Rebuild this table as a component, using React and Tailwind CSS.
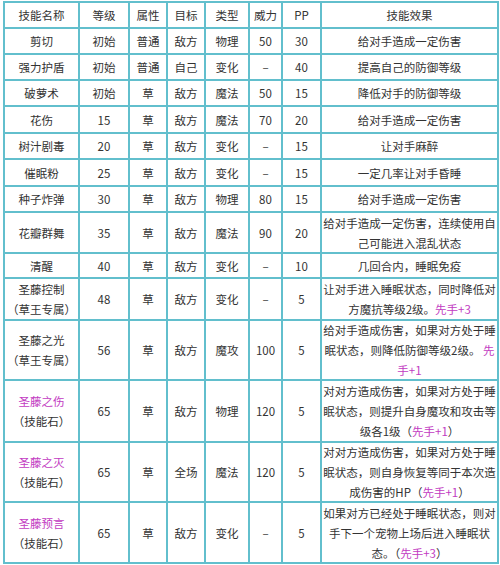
import React from "react";

const P = ({ children }) => <span className="text-[#c23bc2]">{children}</span>;

const rows = [
  { name: ["剪切"], lv: "初始", attr: "普通", tgt: "敌方", type: "物理", pow: "50", pp: "30", eff: ["给对手造成一定伤害"] },
  { name: ["强力护盾"], lv: "初始", attr: "普通", tgt: "自己", type: "变化", pow: "–", pp: "40", eff: ["提高自己的防御等级"] },
  { name: ["破萝术"], lv: "初始", attr: "草", tgt: "敌方", type: "魔法", pow: "50", pp: "15", eff: ["降低对手的防御等级"] },
  { name: ["花伤"], lv: "15", attr: "草", tgt: "敌方", type: "魔法", pow: "70", pp: "20", eff: ["给对手造成一定伤害"] },
  { name: ["树汁剧毒"], lv: "20", attr: "草", tgt: "敌方", type: "变化", pow: "–", pp: "15", eff: ["让对手麻醉"] },
  { name: ["催眠粉"], lv: "25", attr: "草", tgt: "敌方", type: "变化", pow: "–", pp: "15", eff: ["一定几率让对手昏睡"] },
  { name: ["种子炸弹"], lv: "30", attr: "草", tgt: "敌方", type: "物理", pow: "80", pp: "15", eff: ["给对手造成一定伤害"] },
  { name: ["花瓣群舞"], lv: "35", attr: "草", tgt: "敌方", type: "魔法", pow: "90", pp: "20", eff: ["给对手造成一定伤害，连续使用自", "己可能进入混乱状态"] },
  { name: ["清醒"], lv: "40", attr: "草", tgt: "敌方", type: "变化", pow: "–", pp: "10", eff: ["几回合内，睡眠免疫"] },
  { name: ["圣藤控制", "（草王专属）"], lv: "48", attr: "草", tgt: "敌方", type: "变化", pow: "–", pp: "5", eff: ["让对手进入睡眠状态，同时降低对", <>方魔抗等级2级。<P>先手+3</P></>] },
  { name: ["圣藤之光", "（草王专属）"], lv: "56", attr: "草", tgt: "敌方", type: "魔攻", pow: "100", pp: "5", eff: ["给对手造成伤害，如果对方处于睡", <>眠状态，则降低防御等级2级。 <P>先</P></>, <P>手+1</P>] },
  { name: [<P>圣藤之伤</P>, "（技能石）"], lv: "65", attr: "草", tgt: "敌方", type: "物理", pow: "120", pp: "5", eff: ["对对方造成伤害，如果对方处于睡", "眠状态，则提升自身魔攻和攻击等", <>级各1级（<P>先手+1</P>）</>] },
  { name: [<P>圣藤之灭</P>, "（技能石）"], lv: "65", attr: "草", tgt: "全场", type: "魔法", pow: "120", pp: "5", eff: ["对对方造成伤害，如果对方处于睡", "眠状态，则自身恢复等同于本次造", <>成伤害的HP（<P>先手+1</P>）</>] },
  { name: [<P>圣藤预言</P>, "（技能石）"], lv: "65", attr: "草", tgt: "敌方", type: "变化", pow: "–", pp: "5", eff: ["如果对方已经处于睡眠状态，则对", "手下一个宠物上场后进入睡眠状", <>态。（<P>先手+3</P>）</>] },
];

function Cell({ children }) {
  return (
    <div className="bg-white flex flex-col items-center justify-center text-center leading-[20px] whitespace-nowrap overflow-hidden">
      {children}
    </div>
  );
}

export default function App() {
  return (
    <div className="w-[500px] h-[565px] bg-white pt-[1px] pl-[3px]">
      <div
        className="inline-grid bg-[#62bfcd] p-[2px] gap-[2px] grid-cols-[73px_48px_36px_36px_42px_31px_37px_175px] grid-rows-[24px_24px_24px_24px_25px_24px_25px_24px_39px_23px_40px_58px_60px_58px_59px] text-[#333] text-[11.5px]"
        style={{ fontFamily: '"Noto Sans CJK SC", "Noto Sans", sans-serif' }}
      >
        {["技能名称", "等级", "属性", "目标", "类型", "威力", "PP", "技能效果"].map((t) => (
          <Cell key={t}>{t}</Cell>
        ))}
        {rows.map((r, i) => (
          <React.Fragment key={i}>
            <Cell>{r.name.map((n, j) => <div key={j}>{n}</div>)}</Cell>
            <Cell>{r.lv}</Cell>
            <Cell>{r.attr}</Cell>
            <Cell>{r.tgt}</Cell>
            <Cell>{r.type}</Cell>
            <Cell>{r.pow}</Cell>
            <Cell>{r.pp}</Cell>
            <Cell>{r.eff.map((n, j) => <div key={j}>{n}</div>)}</Cell>
          </React.Fragment>
        ))}
      </div>
    </div>
  );
}
